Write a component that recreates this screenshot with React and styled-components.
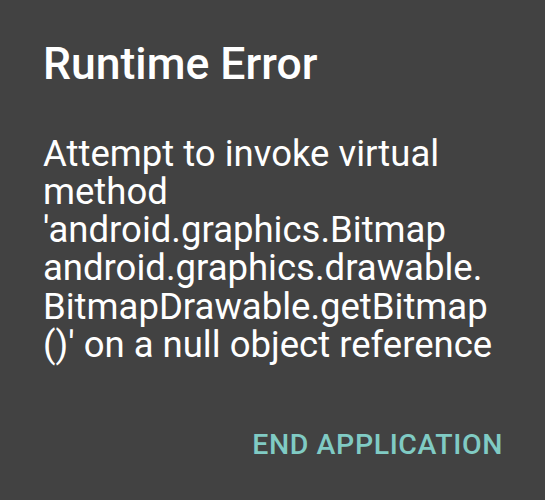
import React from 'react';
import styled, { createGlobalStyle } from 'styled-components';

const GlobalStyle = createGlobalStyle`
	html, body {
		margin: 0;
		padding: 0;
		background: #424242;
	}
`

export default function App () {
	return (
		<>
			<GlobalStyle />
			<Dialog>
				<Title>Runtime Error</Title>
				<Message>
					Attempt to invoke virtual method 'android.graphics.Bitmap android.graphics.drawable.<wbr />BitmapDrawable.getBitmap<wbr />()' on a null object reference
				</Message>
				<Actions>
					<ActionButton>END APPLICATION</ActionButton>
				</Actions>
			</Dialog>
		</>
	)
}

const Dialog = styled.div`
	width: 545px;
	height: 500px;
	box-sizing: border-box;
	background: #424242;
	font-family: Roboto, "Noto Sans", sans-serif;
	padding: 38px 43px 0 43px;
	display: flex;
	flex-direction: column;
`

const Title = styled.h1`
	margin: 0;
	font-size: 44.5px;
	font-weight: 500;
	line-height: 52px;
	color: #ffffff;
`

const Message = styled.p`
	margin: 44.5px 0 0 0;
	font-size: 36.5px;
	line-height: 38.3px;
	color: #ffffff;
`

const Actions = styled.div`
	display: flex;
	justify-content: flex-end;
	margin-top: 64px;
	margin-right: -1px;
`

const ActionButton = styled.button`
	background: none;
	border: none;
	padding: 0;
	font-family: Roboto, "Noto Sans", sans-serif;
	font-size: 28.5px;
	line-height: 34px;
	font-weight: 500;
	letter-spacing: 0.6px;
	color: #80cbc4;
	cursor: pointer;
`
